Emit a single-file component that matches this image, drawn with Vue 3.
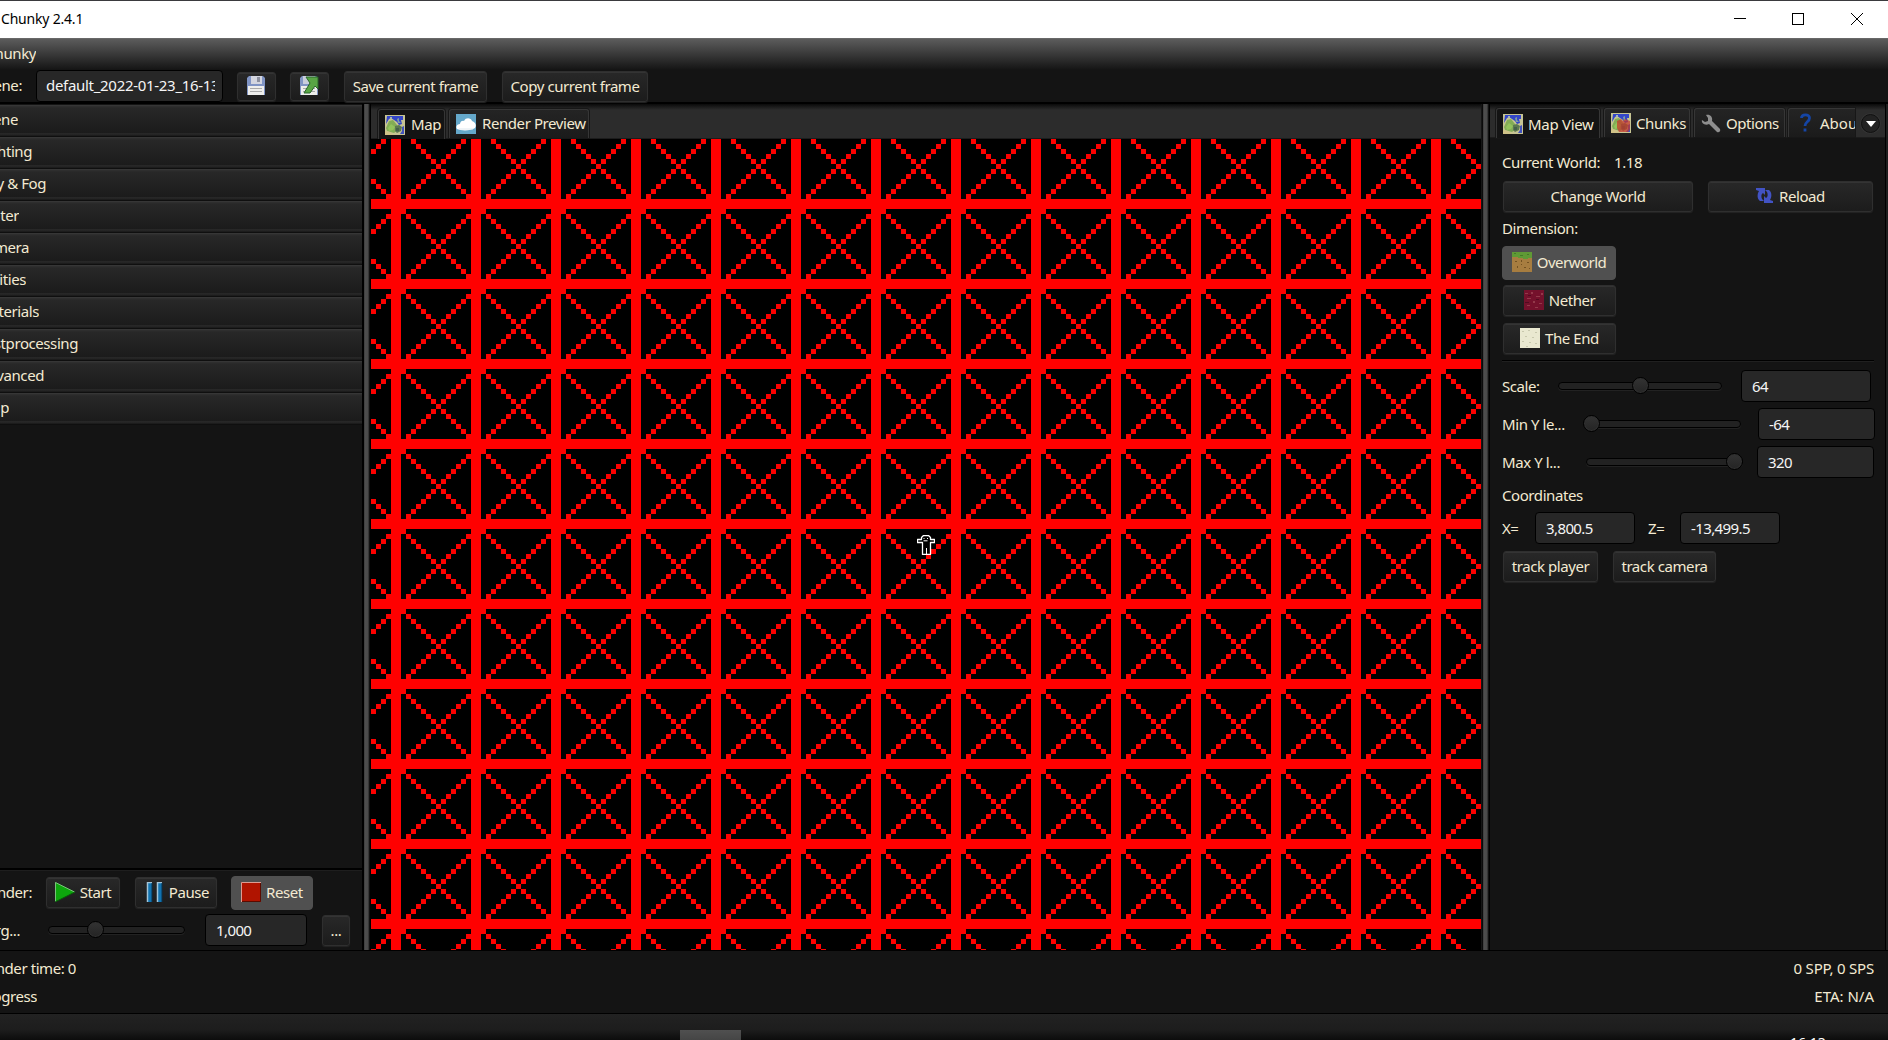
<script setup>
const sections = [
  { name: 'Scene', end: 18 },
  { name: 'Lighting', end: 32 },
  { name: 'Sky & Fog', end: 46 },
  { name: 'Water', end: 19 },
  { name: 'Camera', end: 29 },
  { name: 'Entities', end: 26 },
  { name: 'Materials', end: 39 },
  { name: 'Postprocessing', end: 78 },
  { name: 'Advanced', end: 44 },
  { name: 'Help', end: 9 },
]
const cells = []
for (let i = 2; i < 16; i++) {
  cells.push([i, i])
  if (i > 2) cells.push([i, 18 - i])
}
</script>

<template>
  <svg class="defs" width="0" height="0">
    <symbol id="map" viewBox="0 0 20 20">
      <rect width="20" height="20" fill="#c6c493" />
      <path d="M2 1h16v4h-2l1 4-3 1-2-3-3-2-3-2-2 1-3 5H1z" fill="#3346c8" />
      <path d="M5 2h2v2H5z" fill="#a5b6b0" />
      <path d="M12 4l2-1v3l2 2h-3z" fill="#7f9fa0" />
      <path d="M1 13l3-7 4-1 4 5 1 5-4 3-7-2z" fill="#83ad55" />
      <path d="M3 13l3-4 4 3-2 3-4 1z" fill="#93c35c" />
      <path d="M10 11l4-1 3 2-1 4-4 2-2-2z" fill="#5b7850" />
      <path d="M11 13h3v3h-3z" fill="#45604a" />
      <path d="M17 12l2-1v8h-4l2-3z" fill="#4152bd" />
      <path d="M0 16l5 1 4 3H0z" fill="#cfc287" />
    </symbol>
  </svg>
  <div class="app">
    <div class="title">
      <span class="t name">Chunky 2.4.1</span>
      <svg width="138" height="16" fill="none" stroke="#000" shape-rendering="crispEdges">
        <path d="M1 7.5h12M59.5 2.5h11v11h-11z" />
        <path d="M118 2l12 12M130 2l-12 12" shape-rendering="auto" />
      </svg>
    </div>
    <div class="menu"><span class="t cut" style="width: 36px">Chunky</span></div>
    <div class="toolbar">
      <span class="t cut scene">Scene:</span>
      <div class="field file"><span class="t">default_2022-01-23_16-13</span></div>
      <div class="btn ico">
        <svg width="20" height="20"><path d="M1 2l2-2h14l2 2v17H1z" fill="#8094c4" /><path d="M5 0h11v8H5z" fill="#d3d5df" /><path d="M11 1h3v5h-3z" fill="#8b8f9e" /><path d="M2 10h16v9H2z" fill="#eeeeec" /><path d="M4 12.5h12M4 15.5h12" stroke="#aaa" /></svg>
      </div>
      <div class="btn ico two">
        <svg width="20" height="20"><path d="M1 2l2-2h14l2 2v17H1z" fill="#8094c4" /><path d="M4 0h12v8H4z" fill="#c9cddc" /><path d="M2 10h16v9H2z" fill="#eeeeec" /><path d="M4 12.5h12M4 15.5h12" stroke="#aaa" /><path d="M7 1h12v12l-3-3-5 7H5l6-10z" fill="#58a544" stroke="#28652a" /></svg>
      </div>
      <div class="btn save"><span class="t">Save current frame</span></div>
      <div class="btn copy"><span class="t">Copy current frame</span></div>
    </div>

    <div class="main">
      <div class="left">
        <div class="accordion">
          <div v-for="s in sections" :key="s.name" class="sec">
            <span class="t cut" :style="{ width: s.end + 'px' }">{{ s.name }}</span>
          </div>
        </div>
        <div class="render">
          <div class="rrow">
            <span class="t cut rlabel">Render:</span>
            <div class="btn start">
              <svg width="21" height="20"><path d="M0 0l20 10L0 20z" fill="#0da60d" /><path d="M.5 20V.5l19 9.5" fill="none" stroke="#7cc07c" /><path d="M0 20l20-10" stroke="#075c07" /></svg>
              <span class="t">Start</span>
            </div>
            <div class="btn pause">
              <svg width="18" height="20"><path d="M1 0h5v20H1zM11 0h5v20h-5z" fill="#1173b0" /><path d="M1.5 20V.5H6M11.500 20V.5H16" stroke="#a3c4d8" fill="none" stroke-width="1.500" /><path d="M6 1v19M16 1v19" stroke="#07304c" /></svg>
              <span class="t">Pause</span>
            </div>
            <div class="btn lit reset">
              <svg width="20" height="20"><path d="M0 0h20v20H0z" fill="#b01400" /><path d="M.5 20V.5H20" stroke="#dd9c92" fill="none" /><path d="M19.500 1v18.500H1" stroke="#5c0b00" fill="none" /></svg>
              <span class="t">Reset</span>
            </div>
          </div>
          <div class="rrow second">
            <span class="t cut tlabel">Targ...</span>
            <div class="slider s0"><i></i></div>
            <div class="field spp"><span class="t">1,000</span></div>
            <div class="btn more"><span class="t">...</span></div>
          </div>
        </div>
      </div>
      <div class="split"></div>

      <div class="center">
        <div class="tabs">
          <div class="tab on maptab"><svg width="20" height="20"><use href="#map" /></svg><span class="t">Map</span></div>
          <div class="tab prev">
            <svg width="20" height="20"><path d="M0 0h20v20H0z" fill="#65a8ca" /><path d="M1 15c-2-3 1-5 3-5 0-3 3-4 4-3 2-4 7-3 8 0 3 1 5 4 3 7-4 3-14 3-18 1z" fill="#fff" /><path d="M3 15h14" stroke="#dfe8ee" /></svg>
            <span class="t">Render Preview</span>
          </div>
        </div>
        <div class="map">
          <svg class="grid" width="1110" height="811" shape-rendering="crispEdges">
            <defs>
              <pattern id="chunk" x="20" y="60" width="80" height="80" patternUnits="userSpaceOnUse">
                <rect width="80" height="80" fill="#000" />
                <g fill="#f00">
                  <rect width="80" height="10" /><rect width="10" height="80" />
                  <rect v-for="(c, i) in cells" :key="i" :x="c[0] * 5" :y="c[1] * 5" width="5" height="5" />
                </g>
              </pattern>
            </defs>
            <rect width="1110" height="811" fill="url(#chunk)" />
          </svg>
          <svg class="player" width="18" height="20" viewBox="0 0 18 20">
            <path d="M4.500 4.500v-2l2-2h5l2 2v2h4v3h-4v12h-8v-12h-5v-3z" fill="#000" stroke="#fff" stroke-width="1.300" stroke-linejoin="round" />
            <path d="M6.500 3.500h1M10 3.500h1M6.500 5.800h4M9.500 13v6" stroke="#fff" />
          </svg>
        </div>
      </div>
      <div class="split r"></div>

      <div class="right">
        <div class="tabs">
          <div class="tab on t1"><svg width="20" height="20"><use href="#map" /></svg><span class="t">Map View</span></div>
          <div class="tab t2"><svg width="20" height="20"><use href="#map" /><path d="M6 8l4-2 2 2 2-2 5 2v8l-2 3H8l-2-4z" fill="#c8362a" fill-opacity=".72" /></svg><span class="t">Chunks</span></div>
          <div class="tab t3">
            <svg width="20" height="20"><path d="M5 2c4-1 7 2 6 6l8 8c1 2-1 4-3 3L8 11C4 13 0 10 1 7l3 2 3-1 0-3z" fill="#8e8e8e" /></svg>
            <span class="t">Options</span>
          </div>
          <div class="tab t4">
            <svg width="12" height="20"><path d="M1.500 5C1.500 1 9.500.5 9.500 5c0 4-4.500 3.500-4.500 8M5 15.500v3" fill="none" stroke="#1545a5" stroke-width="2.800" /></svg>
            <span class="t">Abou</span>
          </div>
          <div class="drop"><svg width="12" height="8"><path d="M1 1h10L6 7z" fill="#fff" /></svg></div>
        </div>
        <div class="panel">
          <div class="row world"><span class="t w98">Current World:</span><span class="t ver">1.18</span></div>
          <div class="row acts">
            <div class="btn change"><span class="t">Change World</span></div>
            <div class="btn reload">
              <svg width="18" height="16" fill="#4253c4"><path id="arrow" d="M0 0h9v7L7 5c-2 1-2 4-1 6l2 2H4C1 11 1 6 3 3L0 2z" /><use href="#arrow" transform="rotate(180 8.500 7.500)" /></svg>
              <span class="t">Reload</span>
            </div>
          </div>
          <div class="row dim"><span class="t">Dimension:</span></div>
          <div class="btn lit d1">
            <svg width="20" height="20"><path d="M0 0h20v20H0z" fill="#a77d40" /><path d="M0 0h20v6h-4v1h-5V6H6V5H0z" fill="#5f9a35" /><path d="M2 1h2v1H2zM8 3h3v1H8zM15 2h2v1h-2z" fill="#447c26" /><path d="M3 9h2v1H3zM9 8h1v2H9zM15 10h2v1h-2zM5 14h1v2H5zM12 15h2v1h-2zM17 16h1v1h-1zM9 12h1v1H9z" fill="#735222" /></svg>
            <span class="t">Overworld</span>
          </div>
          <div class="btn d2">
            <svg width="20" height="20"><path d="M0 0h20v20H0z" fill="#75112c" /><path d="M1 3h3v1H1zM7 2h2v2H7zM12 6h4v1h-4zM3 8h4v1H3zM9 11h2v2H9zM15 13h3v1h-3zM3 15h3v1H3zM11 17h3v1h-3zM17 3h2v2h-2z" fill="#93394a" /><path d="M4 5h3v1H4zM12 9h3v1h-3zM1 12h4v1H1z" fill="#520b20" /></svg>
            <span class="t">Nether</span>
          </div>
          <div class="btn d3">
            <svg width="20" height="20"><path d="M0 0h20v20H0z" fill="#e9e8d0" /><path d="M2 3h2v1H2zM8 2h2v1H8zM15 4h2v1h-2zM5 8h2v1H5zM12 9h2v1h-2zM2 13h2v1H2zM9 14h2v1H9zM15 15h2v1h-2zM6 18h2v1H6z" fill="#c8c8ad" /></svg>
            <span class="t">The End</span>
          </div>
          <div class="sep"></div>
          <div class="row srow">
            <span class="t lab">Scale:</span><div class="slider s1"><i></i></div><div class="field f1"><span class="t">64</span></div>
          </div>
          <div class="row srow">
            <span class="t lab">Min Y le...</span><div class="slider s2"><i></i></div><div class="field f2"><span class="t">-64</span></div>
          </div>
          <div class="row srow">
            <span class="t lab">Max Y l...</span><div class="slider s3"><i></i></div><div class="field f3"><span class="t">320</span></div>
          </div>
          <div class="row coords"><span class="t">Coordinates</span></div>
          <div class="row xz">
            <span class="t xl">X=</span><div class="field f4"><span class="t">3,800.5</span></div>
            <span class="t zl">Z=</span><div class="field f4"><span class="t">-13,499.5</span></div>
          </div>
          <div class="row track">
            <div class="btn tp"><span class="t">track player</span></div>
            <div class="btn tc"><span class="t">track camera</span></div>
          </div>
        </div>
      </div>
      <div class="edge"></div>
    </div>

    <div class="status">
      <div class="line"><span class="t cut" style="width: 76px">Render time: 0</span><span class="t rate">0 SPP, 0 SPS</span></div>
      <div class="line"><span class="t cut" style="width: 37px">Progress</span><span class="t eta">ETA: N/A</span></div>
    </div>
    <div class="under">
      <div class="block"></div>
      <span class="t clock">16:13</span>
    </div>
  </div>
</template>

<style>
body { margin: 0; background: #141414; }
</style>

<style scoped>
* { box-sizing: border-box; }
.defs { position: absolute; }
.app { width: 1888px; height: 1040px; overflow: hidden; display: flex; flex-direction: column; background: #141414; color: #f3ead2; font: 15px/20px "Noto Sans", sans-serif; letter-spacing: -0.42px; }
.t { white-space: pre; flex: none; display: block; }
.cut { overflow: hidden; display: flex; justify-content: flex-end; }
svg { flex: none; display: block; }
.title { height: 38px; border-top: 1px solid #3a3a3e; background: #fff; color: #000; display: flex; align-items: center; justify-content: space-between; padding: 0 24px 0 1px; flex: none; }
.title svg { margin-right: -7px; margin-top: -1px; }
.name { font-size: 14px; letter-spacing: -0.2px; margin-top: -2px; }
.menu { height: 32px; flex: none; background: linear-gradient(#747474, #5c5c5c 1px, #141414); display: flex; align-items: center; padding-bottom: 2px; }
.toolbar { height: 34px; flex: none; display: flex; align-items: flex-start; border-bottom: 2px solid #000; }
.scene { width: 22px; margin-top: 5px; }
.btn { height: 31px; border: 1px solid #2f2f2f; border-radius: 3px; background: linear-gradient(#282828, #1c1c1c); box-shadow: inset 0 1px #343434, 0 1px 1px #242424; display: flex; align-items: center; justify-content: center; flex: none; padding-bottom: 2px; }
.btn.lit { height: 34px; background: #505050; border-color: #505050; box-shadow: none; border-radius: 4px; }
.field { height: 32px; border: 1px solid #000; border-radius: 4px; background: #272727; display: flex; align-items: center; padding-left: 10px; overflow: hidden; flex: none; color: #f5f5f5; letter-spacing: -0.6px; }
.file { width: 187px; margin: 0 0 0 14px; padding: 0 7px 2px 9px; letter-spacing: -0.3px; }
.file .t { overflow: hidden; flex: 0 1 auto; width: 169px; }
.ico { width: 39px; height: 29px; margin: 2px 0 0 14px; padding: 0 1px 1px 0; }
.save { width: 143px; margin: 1px 0 0 15px; letter-spacing: -0.48px; }
.copy { width: 146px; margin: 1px 0 0 15px; }
.main { height: 847px; flex: none; display: flex; border-bottom: 1px solid #000; }
.left { width: 362px; flex: none; display: flex; flex-direction: column; justify-content: space-between; }
.accordion { padding-top: 1px; }
.sec { height: 32px; border-top: 1px solid #363636; border-bottom: 1px solid #0f0f0f; background: linear-gradient(#303030, #282828 2px, #1b1b1b 27px, #333 28px, #161616 29px, #222 30px); display: flex; padding-top: 3px; }
.render { height: 82px; border-top: 2px solid #000; box-shadow: inset 0 1px #1e1e1e; padding-top: 6px; }
.rrow { display: flex; height: 38px; align-items: flex-start; }
.rlabel { width: 32px; margin-top: 6px; }
.tlabel { width: 20px; margin-top: 6px; }
.start { width: 74px; margin: 1px 0 0 14px; gap: 4px; }
.pause { width: 82px; margin: 1px 0 0 15px; gap: 5px; padding-left: 3px; }
.reset { width: 82px; margin-left: 14px; gap: 5px; }
.spp { width: 102px; margin-left: 20px; }
.more { width: 28px; margin: 1px 0 0 15px; }
.split { width: 9px; flex: none; background: linear-gradient(90deg, #000 2px, #333 2px, #4e4e4e 3px, #4a4a4a 6px, #222 7px, #000 8px); }
.center { width: 1110px; flex: none; }
.split.r { background: linear-gradient(90deg, #151515 1px, #000 2px, #333 2px, #4e4e4e 3px, #4a4a4a 6px, #222 7px, #000 8px); }
.right { width: 395px; flex: none; }
.edge { width: 3px; border-left: 1px solid #000; background: #1d1d1d; }
.tabs { height: 35px; display: flex; align-items: flex-end; background: linear-gradient(#0a0a0a, #2c2c2c 6px); border-bottom: 1px solid #1c1c1c; }
.right .tabs { height: 34px; }
.tab { height: 29px; border: 1px solid #363636; border-bottom: 0; border-radius: 3px 3px 0 0; box-shadow: 0 0 0 1px #171717; background: linear-gradient(#242424, #1b1b1b); display: flex; align-items: center; flex: none; padding-left: 6px; overflow: hidden; }
.tab.on { background: #141414; height: 30px; margin-bottom: -1px; }
.tab .t { margin-left: 5px; }
.maptab { width: 67px; margin-left: 7px; }
.prev { width: 140px; margin-left: 4px; }
.t1 { width: 104px; margin-left: 6px; letter-spacing: -0.3px; }
.t2 { width: 86px; margin-left: 4px; }
.t3 { width: 91px; margin-left: 4px; }
.t4 { width: 67px; margin-left: 3px; padding-left: 11px; border-right: 0; border-radius: 3px 0 0 0; letter-spacing: 0; }
.t4 .t { margin-left: 8px; }
.tab.prev .t, .maptab .t { margin: -2px 0 0 6px; }
.drop { width: 19px; height: 19px; border-radius: 50%; border: 1px solid #111; background: #222; margin: 0 0 4px 6px; display: flex; align-items: center; justify-content: center; box-shadow: 0 0 0 1px #333; }
.map { position: relative; height: 811px; background: #000; overflow: hidden; }
.player { position: absolute; left: 546px; top: 396px; }
.panel { padding-left: 12px; }
.row { display: flex; }
.world { height: 43px; padding-top: 14px; }
.w98 { width: 98px; }
.ver { margin-left: 14px; }
.change { width: 190px; margin-left: 1px; }
.reload { width: 165px; margin-left: 15px; gap: 5px; }
.dim { height: 34px; padding-top: 6px; }
.d1 { width: 114px; gap: 5px; letter-spacing: -0.5px; }
.d2, .d3 { width: 113px; margin: 5px 0 7px 1px; gap: 5px; }
.d3 { margin-top: 0; }
.sep { margin-top: -1px; width: 372px; border-top: 1px solid #000; height: 2px; background: #202020; margin-bottom: 8px; }
.srow { height: 38px; align-items: flex-start; }
.lab { margin-top: 6px; width: 56px; }
.slider { height: 8px; border: 1px solid #000; border-radius: 4px; background: #222; box-shadow: 0 1px #222; position: relative; margin-top: 12px; flex: none; }
.slider i { position: absolute; top: -6px; width: 17px; height: 17px; border-radius: 50%; border: 1px solid #000; background: linear-gradient(#333, #242424); box-shadow: inset 0 0 0 1px #303030; }
.s0 { width: 137px; margin-left: 28px; }
.s0 i { left: 38px; }
.s1 { width: 164px; }
.s1 i { left: 73px; }
.f1 { width: 130px; margin-left: 19px; }
.s2 { width: 157px; margin-left: 26px; }
.s2 i { left: -2px; }
.f2 { width: 117px; margin-left: 17px; }
.s3 { width: 157px; margin-left: 28px; }
.s3 i { left: 139px; }
.f3 { width: 117px; margin-left: 14px; }
.coords { height: 28px; padding-top: 1px; }
.xz { height: 39px; }
.xl, .zl { margin-top: 6px; width: 33px; }
.zl { width: 32px; margin-left: 13px; }
.f4 { width: 100px; }
.tp { width: 95px; margin-left: 1px; }
.tc { width: 103px; margin-left: 15px; }
.status { height: 63px; flex: none; padding-top: 3px; border-bottom: 1px solid #000; }
.line { height: 28px; padding: 4px 14px 0 0; display: flex; justify-content: space-between; }
.rate { letter-spacing: -0.2px; }
.eta { letter-spacing: 0; }
.under { height: 26px; flex: none; background: linear-gradient(#222, #1d1d1d 60%, #0c0c0c); display: flex; align-items: flex-start; overflow: hidden; }
.block { width: 61px; height: 10px; background: linear-gradient(#505050, #454545); margin: 16px 0 0 680px; }
.clock { color: #fff; font-size: 14px; letter-spacing: 0; margin: 19px 0 0 1049px; }
</style>
